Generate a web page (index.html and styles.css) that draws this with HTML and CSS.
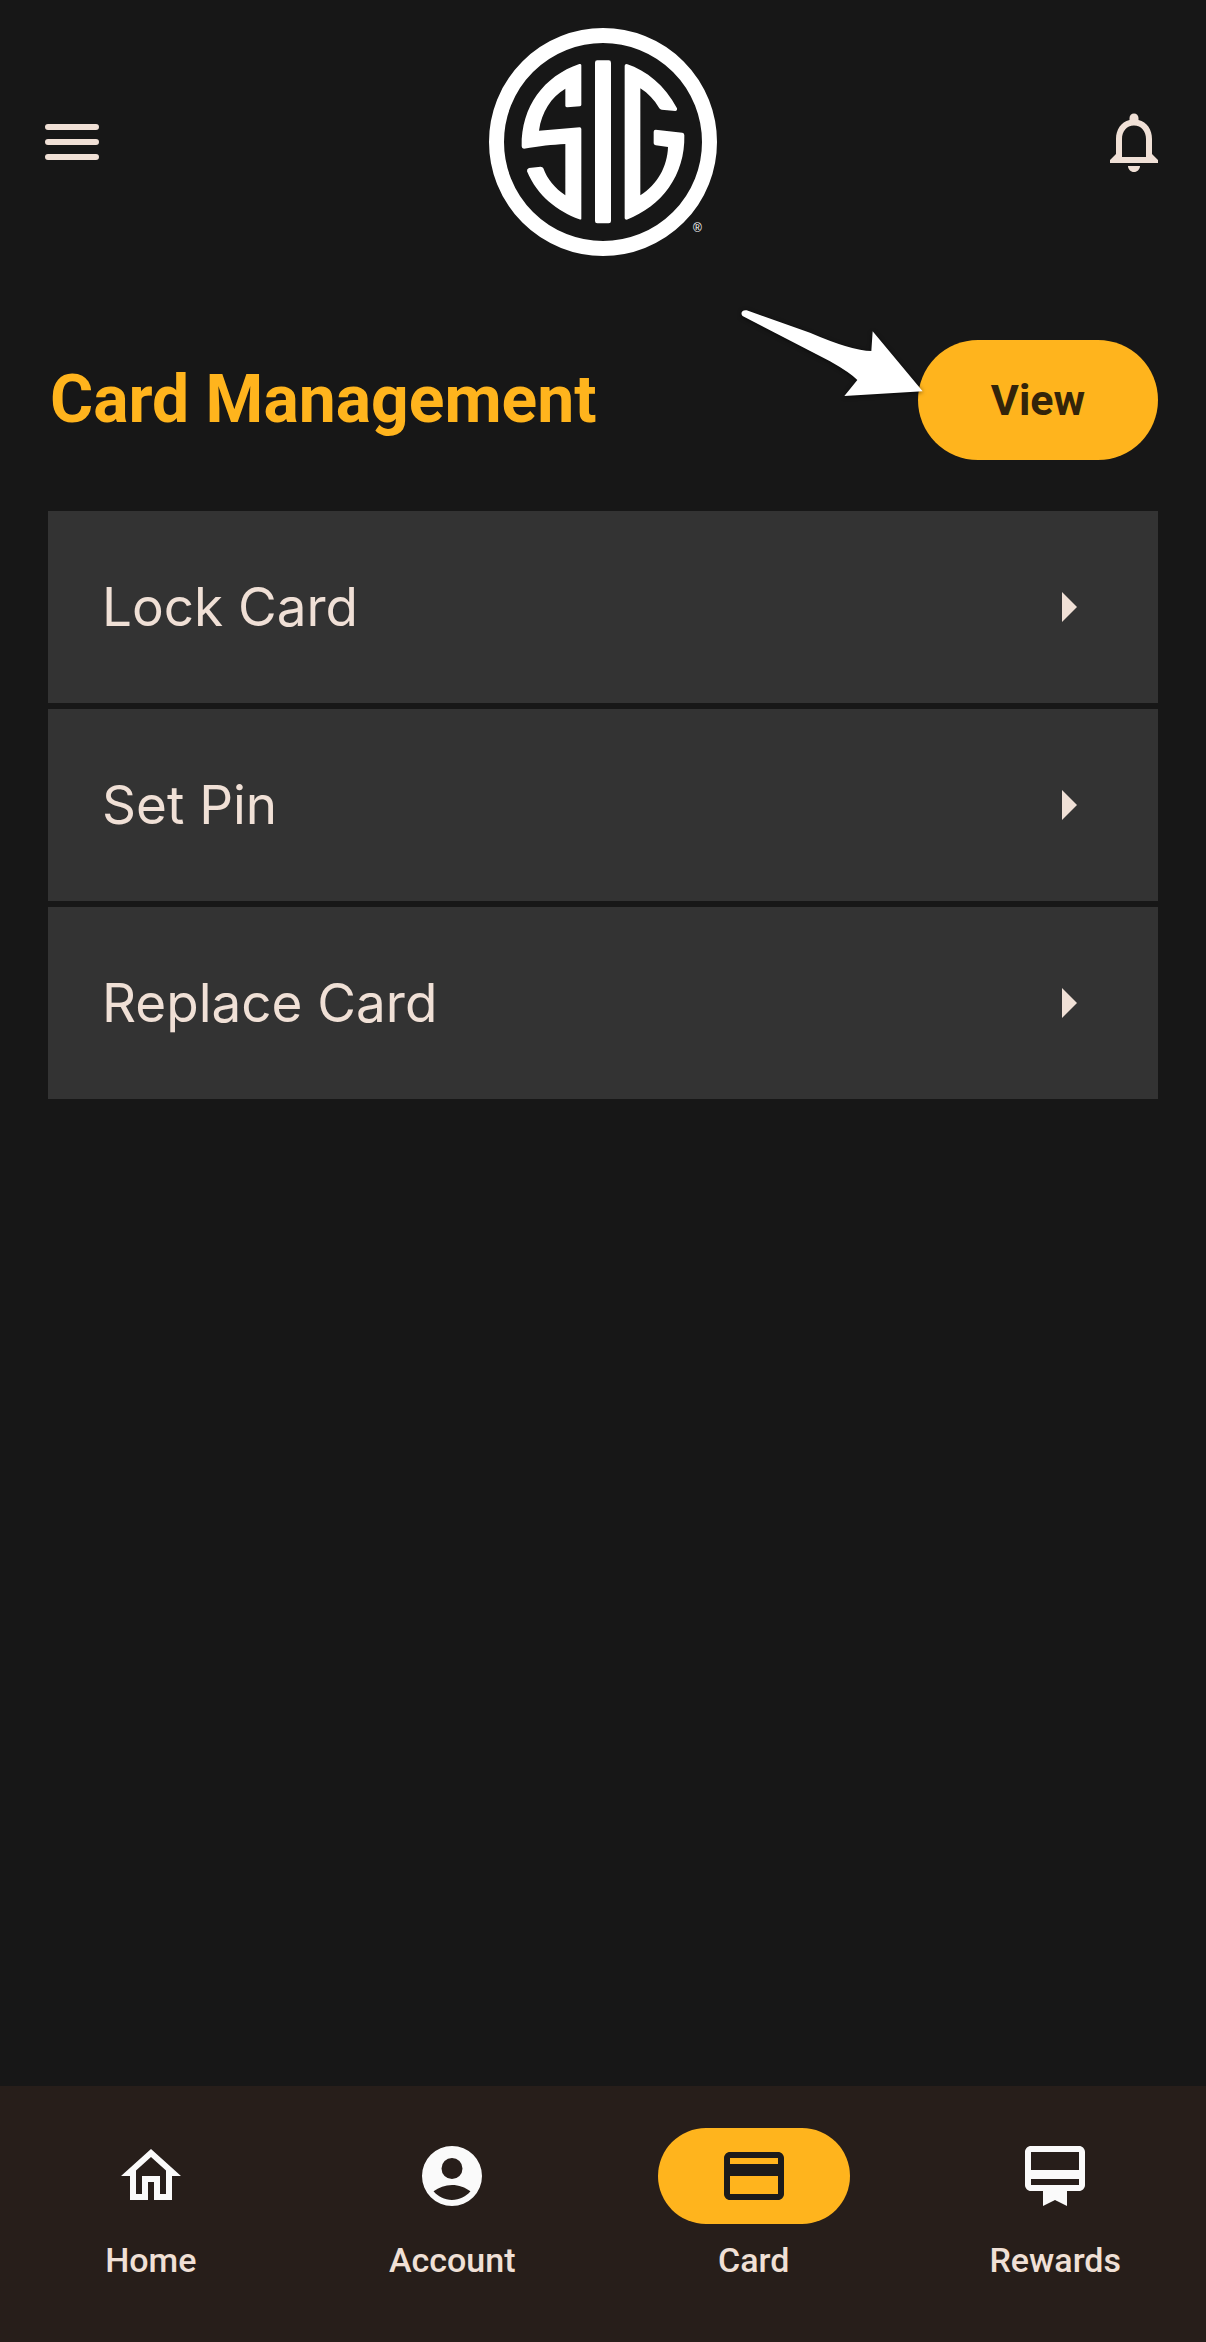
FILE: index.html
```html
<!DOCTYPE html>
<html lang="en">
  <head>
    <meta charset="UTF-8" />
    <meta name="viewport" content="width=device-width, initial-scale=1.0" />
    <title>Card Management</title>
    <link rel="stylesheet" href="styles.css">
  </head>
  <body>
    <header class="top-bar">
      <button type="button" class="icon-button" aria-label="Menu">
        <svg class="icon" viewBox="0 0 24 24">
          <path d="M4 7h16M4 12h16M4 17h16" fill="none" stroke="currentColor" stroke-width="2" stroke-linecap="round" />
        </svg>
      </button>

      <svg class="logo" viewBox="57 54 684 684" role="img" aria-label="SIG">
        <circle cx="399" cy="396" r="319.5" fill="none" stroke="currentColor" stroke-width="45" />
        <path d="M328 162Q334 161 334 166V284Q334 288 330 289L292 292Q286 292 286 287V236C243 262 215 305 207 362L329 352Q334 352 334 357V626Q334 630 328 628C262 604 202 558 171 484Q170 476 177 474L212 470Q218 470 220 475C232 508 255 535 286 556V402C245 404 210 408 162 416Q155 416 155 409C153 290 222 198 328 162z" />
        <rect x="375" y="151" width="48" height="489" rx="7" />
        <path d="M470 162C530 182 584 225 621 295Q622 303 616 303L575 299Q569 298 567 293C553 270 535 250 511 235V556C562 524 592 470 594 411L557 406Q551 405 551 400V365Q551 359 557 359L637 368Q643 369 643 376C646 495 575 590 470 629Q464 629 464 625V167Q464 162 470 162z" />
        <text class="logo-mark" x="669" y="665">®</text>
      </svg>

      <button type="button" class="icon-button" aria-label="Notifications">
        <svg class="icon" viewBox="0 0 24 24">
          <path d="M12 22c1.1 0 2-.9 2-2h-4c0 1.1.89 2 2 2zm6-6v-5c0-3.07-1.63-5.64-4.5-6.32V4c0-.83-.67-1.5-1.5-1.5s-1.5.67-1.5 1.5v.68C7.64 5.36 6 7.92 6 11v5l-2 2v1h16v-1l-2-2zm-2 1H8v-6c0-2.48 1.51-4.5 4-4.5s4 2.02 4 4.5v6z" />
        </svg>
      </button>
    </header>

    <main class="content">
      <div class="title-row">
        <h1>Card Management</h1>
        <div class="view-wrap">
          <button type="button" class="view-button">View</button>
          <svg class="pointer" viewBox="51 45 570 291" aria-hidden="true">
            <path d="M80 61L270 128Q395 182 454 183L458 124L608 304L373 318L412 270Q390 248 330 214L69 79C61 73 63 59 80 61z" />
          </svg>
        </div>
      </div>

      <ul class="actions">
        <li>
          <a href="#lock" class="action">
            Lock Card
            <svg class="icon" viewBox="0 0 24 24"><path d="M10 17l5-5-5-5v10z" /></svg>
          </a>
        </li>
        <li>
          <a href="#pin" class="action">
            Set Pin
            <svg class="icon" viewBox="0 0 24 24"><path d="M10 17l5-5-5-5v10z" /></svg>
          </a>
        </li>
        <li>
          <a href="#replace" class="action">
            Replace Card
            <svg class="icon" viewBox="0 0 24 24"><path d="M10 17l5-5-5-5v10z" /></svg>
          </a>
        </li>
      </ul>
    </main>

    <nav class="tab-bar">
      <a href="#home" class="tab">
        <span class="tab-icon">
          <svg class="icon" viewBox="0 0 24 24">
            <path d="M12 5.69l5 4.5V18h-2v-6H9v6H7v-7.81l5-4.5M12 3L2 12h3v8h6v-6h2v6h6v-8h3L12 3z" />
          </svg>
        </span>
        Home
      </a>
      <a href="#account" class="tab">
        <span class="tab-icon">
          <svg class="icon" viewBox="0 0 24 24">
            <path fill-rule="evenodd" d="M12 2a10 10 0 1 0 0 20 10 10 0 0 0 0-20zM12 6a3.5 3.5 0 1 1 0 7 3.5 3.5 0 0 1 0-7zM12 20c-2.5 0-4.7-1.1-6.15-2.88C7.6 15.8 9.7 15 12 15s4.4.8 6.15 2.12C16.7 18.9 14.5 20 12 20z" />
          </svg>
        </span>
        Account
      </a>
      <a href="#card" class="tab active" aria-current="page">
        <span class="tab-icon">
          <svg class="icon" viewBox="0 0 24 24">
            <path d="M20 4H4c-1.11 0-1.99.89-1.99 2L2 18c0 1.11.89 2 2 2h16c1.11 0 2-.89 2-2V6c0-1.11-.89-2-2-2zm0 14H4v-6h16v6zm0-10H4V6h16v2z" />
          </svg>
        </span>
        Card
      </a>
      <a href="#rewards" class="tab">
        <span class="tab-icon">
          <svg class="icon" viewBox="0 0 24 24">
            <path d="M20 2H4c-1.11 0-2 .89-2 2v11c0 1.11.89 2 2 2h4v5l4-2 4 2v-5h4c1.11 0 2-.89 2-2V4c0-1.11-.89-2-2-2zm0 13H4v-2h16v2zm0-5H4V4h16v6z" />
          </svg>
        </span>
        Rewards
      </a>
    </nav>
  </body>
</html>
```

FILE: styles.css
```css
* {
  margin: 0;
  padding: 0;
  box-sizing: border-box;
}

:root {
  --background: #171717;
  --surface: #333333;
  --nav: #271e1a;
  --accent: #ffb41d;
  --text: #f0e0d6;
}

body {
  min-height: 100vh;
  display: flex;
  flex-direction: column;
  background: var(--background);
  color: var(--text);
  font-family: Roboto, sans-serif;
}

a {
  color: inherit;
  text-decoration: none;
}

button {
  border: none;
  background: none;
  color: inherit;
  font-family: inherit;
  cursor: pointer;
}

svg {
  display: block;
  fill: currentColor;
}

.icon {
  width: 72px;
  height: 72px;
}

/* header */
.top-bar {
  display: flex;
  justify-content: space-between;
  align-items: center;
  padding: 28px 36px;
}

.logo {
  width: 228px;
  height: 228px;
  color: #fff;
  overflow: visible;
}

.logo-mark {
  font-family: "Liberation Sans", sans-serif;
  font-size: 36px;
}

/* main content */
.content {
  flex: 1;
  padding: 56px 48px;
}

.title-row {
  display: flex;
  justify-content: space-between;
  align-items: center;
  margin-bottom: 51px;
}

h1 {
  padding-left: 2px;
  color: var(--accent);
  font-size: 66px;
  font-weight: 700;
  line-height: 80px;
}

.view-wrap {
  position: relative;
}

.view-button {
  min-width: 240px;
  height: 120px;
  border-radius: 60px;
  background: var(--accent);
  color: #33240a;
  font-size: 43px;
  font-weight: 700;
}

/* arrow that lies over the left edge of the button */
.pointer {
  position: absolute;
  top: -35px;
  left: -181px;
  width: 190px;
  height: 97px;
  color: #fff;
  filter: drop-shadow(0 1px 2px rgba(0, 0, 0, 0.6));
  pointer-events: none;
}

.actions {
  display: grid;
  gap: 6px;
  list-style: none;
}

.action {
  display: flex;
  justify-content: space-between;
  align-items: center;
  height: 192px;
  padding: 0 54px;
  background: var(--surface);
  font-family: Inter, sans-serif;
  font-size: 53px;
}

/* bottom navigation */
.tab-bar {
  display: grid;
  grid-template-columns: repeat(4, 1fr);
  height: 256px;
  padding-top: 42px;
  background: var(--nav);
}

.tab {
  display: flex;
  flex-direction: column;
  align-items: center;
  gap: 16px;
  font-size: 34px;
  font-weight: 500;
  line-height: 40px;
}

.tab-icon {
  display: flex;
  justify-content: center;
  align-items: center;
  width: 192px;
  height: 96px;
  border-radius: 48px;
  color: #fafafa;
}

.active .tab-icon {
  background: var(--accent);
  color: #1b1b1b;
}
```
